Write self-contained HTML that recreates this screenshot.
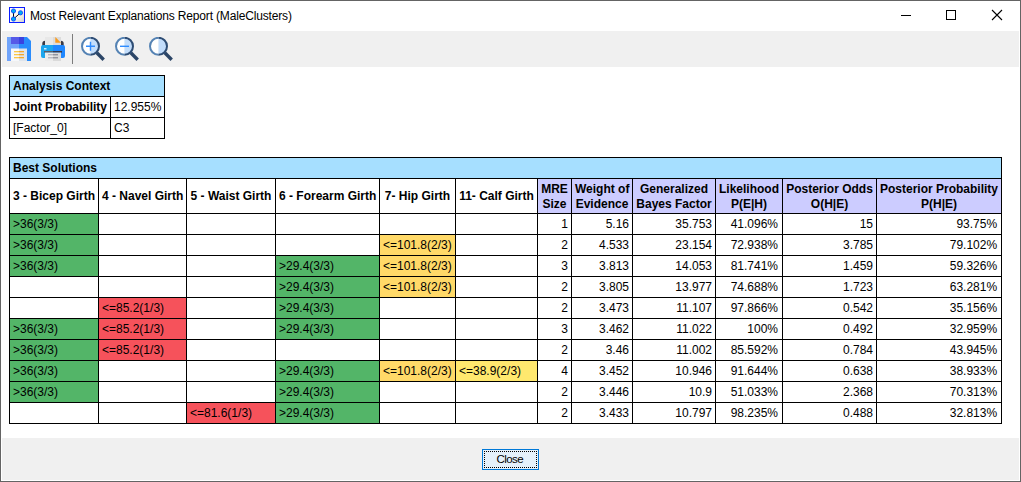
<!DOCTYPE html>
<html>
<head>
<meta charset="utf-8">
<title>Most Relevant Explanations Report (MaleClusters)</title>
<style>
html,body{margin:0;padding:0;}
body{width:1021px;height:482px;overflow:hidden;background:#fff;position:relative;font-family:"Liberation Sans",sans-serif;font-size:12px;color:#000;}
.abs{position:absolute;}
#frame{left:0;top:0;width:1019px;height:480px;border:1px solid #646464;box-sizing:content-box;pointer-events:none;z-index:10;}
#toolbar{left:2px;top:31px;width:1017px;height:36px;background:#f0f0f0;}
#bottom{left:2px;top:438px;width:1017px;height:42px;background:#f0f0f0;}
#title{left:30px;top:8px;font-size:12px;line-height:16px;white-space:nowrap;color:#000;letter-spacing:-0.16px;}
#sep{left:72px;top:34px;width:1px;height:30px;background:#7c7c7c;}
table{border-collapse:collapse;table-layout:fixed;position:absolute;font-size:12px;}
td,th{border:1px solid #000;padding:0 3px;height:21px;line-height:14px;box-sizing:border-box;white-space:nowrap;overflow:hidden;text-align:left;font-weight:normal;vertical-align:middle;}
th{font-weight:bold;}
.hd{background:#a6dfff;}
.lv{background:#ccccff;text-align:center;}
.g{background:#53b568;}
.r{background:#f6525b;}
.y1{background:#ffd968;}
.y2{background:#ffe86e;}
.n{text-align:right;}
#t2 tr.ch th{height:35px;line-height:15px;text-align:center;}
#t2 tr.ch th.lv{padding-top:2px;}
#t2 tr.d td{height:21px;}
#t2 tr.d td:nth-child(10),#t2 tr.d td:nth-child(12){padding-right:4px;}
#close{left:482px;top:449px;width:55px;height:19px;border:1px solid #0078d7;background:#e5f1fb;text-align:center;line-height:19px;font-size:11.500px;letter-spacing:-0.550px;text-indent:-1.500px;}
#close i{position:absolute;left:1px;top:1px;right:1px;bottom:1px;border:1px dotted #000;}
</style>
</head>
<body>
<div class="abs" id="toolbar"></div>
<div class="abs" id="bottom"></div>

<!-- app icon -->
<svg class="abs" style="left:9px;top:7px" width="16" height="16" viewBox="0 0 16 16">
  <defs><linearGradient id="ag" x1="0" y1="0" x2="1" y2="1"><stop offset="0" stop-color="#ffffff"/><stop offset="0.55" stop-color="#fbf8ec"/><stop offset="1" stop-color="#cfcfcf"/></linearGradient></defs>
  <rect x="0.5" y="0.5" width="15" height="15" fill="url(#ag)" stroke="#0a1cff" stroke-width="1"/>
  <path d="M4.5 4 L4.5 12 L11.5 5.8" fill="none" stroke="#111" stroke-width="1"/>
  <circle cx="4.5" cy="4" r="2.1" fill="#00aef4" stroke="#0a46ff" stroke-width="0.9"/>
  <circle cx="4.5" cy="12" r="2.1" fill="#00aef4" stroke="#0a46ff" stroke-width="0.9"/>
  <circle cx="11.5" cy="5.8" r="2.1" fill="#00aef4" stroke="#0a46ff" stroke-width="0.9"/>
</svg>
<div class="abs" id="title">Most Relevant Explanations Report (MaleClusters)</div>

<!-- window controls -->
<svg class="abs" style="left:890px;top:1px" width="129" height="30" viewBox="0 0 129 30">
  <rect x="11" y="14" width="10" height="1" fill="#000"/>
  <rect x="56.500" y="9.500" width="9" height="9" fill="none" stroke="#000" stroke-width="1"/>
  <path d="M102 9 L112 19 M112 9 L102 19" stroke="#000" stroke-width="1.1" fill="none"/>
</svg>

<!-- save icon -->
<svg class="abs" style="left:7px;top:37px" width="24" height="24" viewBox="0 0 24 24">
  <path d="M0 0 H12 V24 H0 Z" fill="#70a4fb"/>
  <path d="M12 0 H20 L24 4 V24 H12 Z" fill="#2a8cfc"/>
  <rect x="4" y="0" width="8" height="7" fill="#565ae8"/>
  <rect x="12" y="0" width="5" height="7" fill="#3b42e0"/>
  <rect x="4" y="11.500" width="8" height="12.500" fill="#f6f8fb"/>
  <rect x="12" y="11.500" width="8" height="12.500" fill="#dde4ec"/>
  <g fill="#f9c646"><rect x="7" y="14" width="5" height="1.300"/><rect x="7" y="17" width="5" height="1.300"/><rect x="7" y="20" width="5" height="1.300"/></g>
  <g fill="#f6a828"><rect x="12" y="14" width="5" height="1.300"/><rect x="12" y="17" width="5" height="1.300"/><rect x="12" y="20" width="5" height="1.300"/></g>
</svg>

<!-- print icon -->
<svg class="abs" style="left:41px;top:37px" width="24" height="24" viewBox="0 0 24 24">
  <path d="M1.300 9 V6.500 Q1.300 3.800 4.200 3.800 V9 Z" fill="#3a3a46"/>
  <path d="M22.700 9 V6.500 Q22.700 3.800 19.800 3.800 V9 Z" fill="#3a3a46"/>
  <rect x="4" y="0" width="8" height="9" fill="#e8e8e8"/>
  <rect x="12" y="0" width="8" height="9" fill="#dcdcdc"/>
  <path d="M14.300 0 L20 5.700 H14.300 Z" fill="#f89a1c"/>
  <path d="M0 10 Q0 8 2 8 H12 V21 H2 Q0 21 0 19 Z" fill="#1ca6ee"/>
  <path d="M24 10 Q24 8 22 8 H12 V21 H22 Q24 21 24 19 Z" fill="#1f87ff"/>
  <rect x="3" y="11" width="2.500" height="1.500" fill="#cdeaff"/>
  <rect x="3" y="14" width="9" height="1.600" fill="#5c5c68"/>
  <rect x="12" y="14" width="9" height="1.600" fill="#3a3a46"/>
  <rect x="4" y="15.600" width="8" height="8.400" fill="#ececec"/>
  <rect x="12" y="15.600" width="8" height="8.400" fill="#dadada"/>
  <rect x="7" y="17.300" width="5" height="1" fill="#a2a2ae"/><rect x="12" y="17.300" width="5" height="1" fill="#777784"/>
  <rect x="7" y="20.300" width="5" height="1" fill="#a2a2ae"/><rect x="12" y="20.300" width="5" height="1" fill="#777784"/>
</svg>

<div class="abs" id="sep"></div>

<!-- zoom icons -->
<svg class="abs" style="left:81px;top:37px" width="24" height="24" viewBox="0 0 24 24">
  <path d="M15.300 15.300 L22.700 22.700" stroke="#2b4566" stroke-width="3.400" fill="none"/>
  <path d="M9.500 0.300 A9 9 0 0 0 9.500 18.300 Z" fill="#fff"/>
  <path d="M9.500 0.300 A9 9 0 0 1 9.500 18.300 Z" fill="#c2ddfb"/>
  <path d="M9.500 0.800 A8.500 8.500 0 0 0 9.500 17.800" fill="none" stroke="#5583b4" stroke-width="2"/>
  <path d="M9.500 0.800 A8.500 8.500 0 0 1 9.500 17.800" fill="none" stroke="#2e4d74" stroke-width="2"/>
  <path d="M5 9.300 H14 M9.500 4.800 V13.800" stroke="#2f8cff" stroke-width="1.400" fill="none"/>
</svg>
<svg class="abs" style="left:115px;top:37px" width="24" height="24" viewBox="0 0 24 24">
  <path d="M15.300 15.300 L22.700 22.700" stroke="#2b4566" stroke-width="3.400" fill="none"/>
  <path d="M9.500 0.300 A9 9 0 0 0 9.500 18.300 Z" fill="#fff"/>
  <path d="M9.500 0.300 A9 9 0 0 1 9.500 18.300 Z" fill="#c2ddfb"/>
  <path d="M9.500 0.800 A8.500 8.500 0 0 0 9.500 17.800" fill="none" stroke="#5583b4" stroke-width="2"/>
  <path d="M9.500 0.800 A8.500 8.500 0 0 1 9.500 17.800" fill="none" stroke="#2e4d74" stroke-width="2"/>
  <path d="M5 9.300 H14" stroke="#2f8cff" stroke-width="1.400" fill="none"/>
</svg>
<svg class="abs" style="left:149px;top:37px" width="24" height="24" viewBox="0 0 24 24">
  <path d="M15.300 15.300 L22.700 22.700" stroke="#2b4566" stroke-width="3.400" fill="none"/>
  <path d="M9.500 0.300 A9 9 0 0 0 9.500 18.300 Z" fill="#fff"/>
  <path d="M9.500 0.300 A9 9 0 0 1 9.500 18.300 Z" fill="#c2ddfb"/>
  <path d="M9.500 0.800 A8.500 8.500 0 0 0 9.500 17.800" fill="none" stroke="#5583b4" stroke-width="2"/>
  <path d="M9.500 0.800 A8.500 8.500 0 0 1 9.500 17.800" fill="none" stroke="#2e4d74" stroke-width="2"/>
</svg>

<!-- table 1 -->
<table id="t1" style="left:9px;top:75px;width:156px;">
  <colgroup><col style="width:101px"><col style="width:54px"></colgroup>
  <tr><th class="hd" colspan="2">Analysis Context</th></tr>
  <tr><th>Joint Probability</th><td>12.955%</td></tr>
  <tr><td>[Factor_0]</td><td>C3</td></tr>
</table>

<!-- table 2 -->
<table id="t2" style="left:9px;top:157px;width:993px;">
  <colgroup>
    <col style="width:89px"><col style="width:88px"><col style="width:89px"><col style="width:104px"><col style="width:76px"><col style="width:82px">
    <col style="width:34px"><col style="width:61px"><col style="width:83px"><col style="width:67px"><col style="width:94px"><col style="width:125px">
  </colgroup>
  <tr><th class="hd" colspan="12">Best Solutions</th></tr>
  <tr class="ch">
    <th>3 - Bicep Girth</th><th>4 - Navel Girth</th><th>5 - Waist Girth</th><th>6 - Forearm Girth</th><th>7- Hip Girth</th><th>11- Calf Girth</th>
    <th class="lv">MRE<br>Size</th><th class="lv">Weight of<br>Evidence</th><th class="lv">Generalized<br>Bayes Factor</th><th class="lv">Likelihood<br>P(E|H)</th><th class="lv">Posterior Odds<br>O(H|E)</th><th class="lv">Posterior Probability<br>P(H|E)</th>
  </tr>
  <tr class="d"><td class="g">&gt;36(3/3)</td><td></td><td></td><td></td><td></td><td></td><td class="n">1</td><td class="n">5.16</td><td class="n">35.753</td><td class="n">41.096%</td><td class="n">15</td><td class="n">93.75%</td></tr>
  <tr class="d"><td class="g">&gt;36(3/3)</td><td></td><td></td><td></td><td class="y1">&lt;=101.8(2/3)</td><td></td><td class="n">2</td><td class="n">4.533</td><td class="n">23.154</td><td class="n">72.938%</td><td class="n">3.785</td><td class="n">79.102%</td></tr>
  <tr class="d"><td class="g">&gt;36(3/3)</td><td></td><td></td><td class="g">&gt;29.4(3/3)</td><td class="y1">&lt;=101.8(2/3)</td><td></td><td class="n">3</td><td class="n">3.813</td><td class="n">14.053</td><td class="n">81.741%</td><td class="n">1.459</td><td class="n">59.326%</td></tr>
  <tr class="d"><td></td><td></td><td></td><td class="g">&gt;29.4(3/3)</td><td class="y1">&lt;=101.8(2/3)</td><td></td><td class="n">2</td><td class="n">3.805</td><td class="n">13.977</td><td class="n">74.688%</td><td class="n">1.723</td><td class="n">63.281%</td></tr>
  <tr class="d"><td></td><td class="r">&lt;=85.2(1/3)</td><td></td><td class="g">&gt;29.4(3/3)</td><td></td><td></td><td class="n">2</td><td class="n">3.473</td><td class="n">11.107</td><td class="n">97.866%</td><td class="n">0.542</td><td class="n">35.156%</td></tr>
  <tr class="d"><td class="g">&gt;36(3/3)</td><td class="r">&lt;=85.2(1/3)</td><td></td><td class="g">&gt;29.4(3/3)</td><td></td><td></td><td class="n">3</td><td class="n">3.462</td><td class="n">11.022</td><td class="n">100%</td><td class="n">0.492</td><td class="n">32.959%</td></tr>
  <tr class="d"><td class="g">&gt;36(3/3)</td><td class="r">&lt;=85.2(1/3)</td><td></td><td></td><td></td><td></td><td class="n">2</td><td class="n">3.46</td><td class="n">11.002</td><td class="n">85.592%</td><td class="n">0.784</td><td class="n">43.945%</td></tr>
  <tr class="d"><td class="g">&gt;36(3/3)</td><td></td><td></td><td class="g">&gt;29.4(3/3)</td><td class="y1">&lt;=101.8(2/3)</td><td class="y2">&lt;=38.9(2/3)</td><td class="n">4</td><td class="n">3.452</td><td class="n">10.946</td><td class="n">91.644%</td><td class="n">0.638</td><td class="n">38.933%</td></tr>
  <tr class="d"><td class="g">&gt;36(3/3)</td><td></td><td></td><td class="g">&gt;29.4(3/3)</td><td></td><td></td><td class="n">2</td><td class="n">3.446</td><td class="n">10.9</td><td class="n">51.033%</td><td class="n">2.368</td><td class="n">70.313%</td></tr>
  <tr class="d"><td></td><td></td><td class="r">&lt;=81.6(1/3)</td><td class="g">&gt;29.4(3/3)</td><td></td><td></td><td class="n">2</td><td class="n">3.433</td><td class="n">10.797</td><td class="n">98.235%</td><td class="n">0.488</td><td class="n">32.813%</td></tr>
</table>

<div class="abs" id="close">Close<i></i></div>
<div class="abs" id="frame"></div>
</body>
</html>
